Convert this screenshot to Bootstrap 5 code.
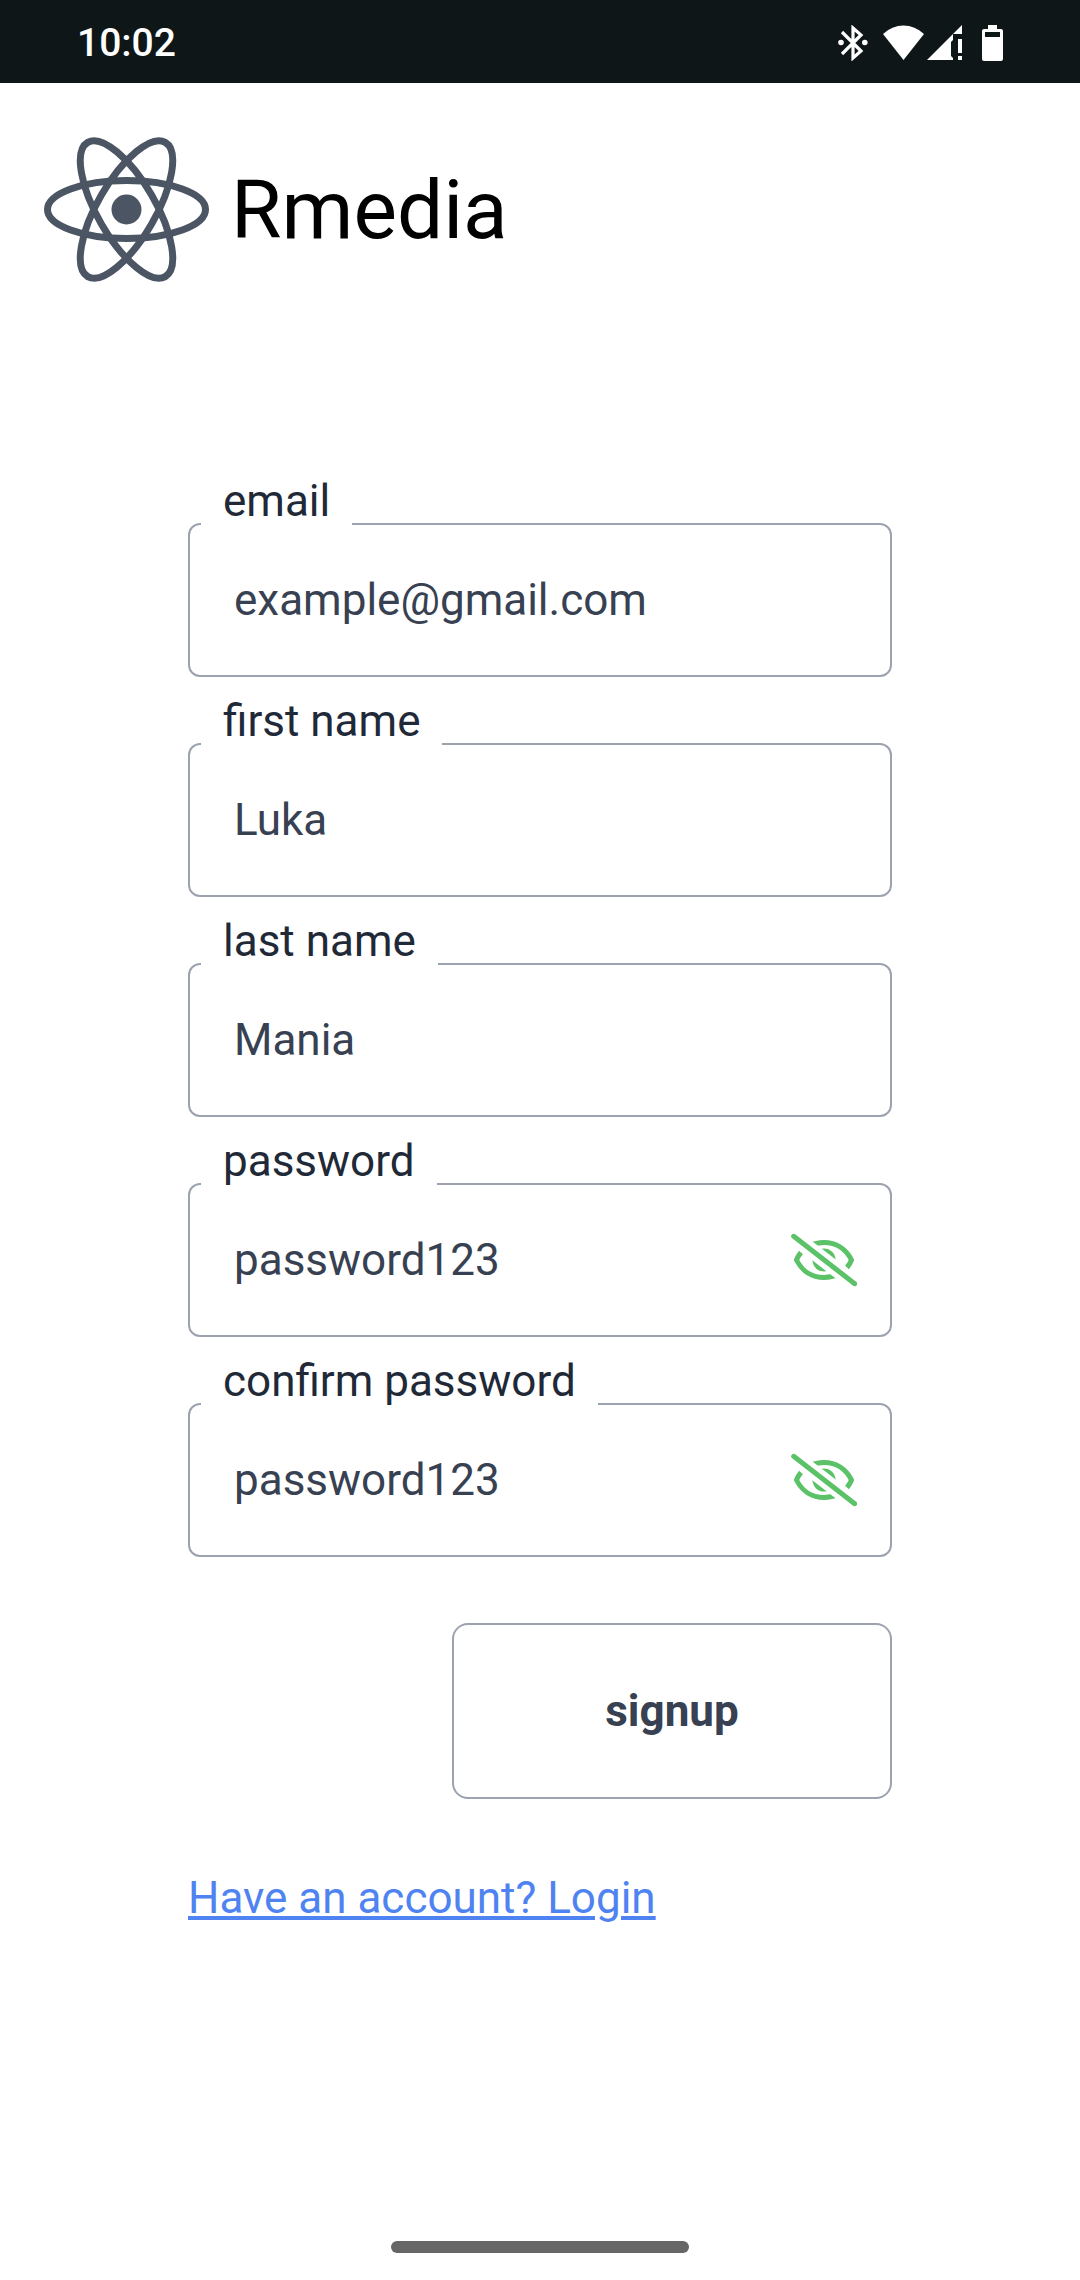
<!DOCTYPE html>
<html lang="en">
<head>
<meta charset="utf-8">
<meta name="viewport" content="width=device-width, initial-scale=1">
<title>Rmedia – signup</title>
<link href="https://cdn.jsdelivr.net/npm/bootstrap@5.3.0/dist/css/bootstrap.min.css" rel="stylesheet">
<style>
  body { font-family: Roboto, "Noto Sans", sans-serif; font-size: 44px; line-height: 52px; color: #374151; background: #fff; }
  .status-bar { background: #0e1617; color: #fff; height: 83px; padding: 3px 77px 0; font-size: 39px; line-height: 44px; font-weight: 500; }
  .status-bar svg { height: 36px; display: block; }
  .icon-bt { margin-right: 15px; }
  .icon-wifi { margin-right: 3px; }
  .icon-cell { margin-right: 20px; }
  .brand { padding: 44px; gap: 22px; color: #000; }
  .brand-name { font-size: 82px; line-height: 96px; font-weight: 400; }
  .signup-form { max-width: 704px; padding-top: 139px; }
  .field + .field { margin-top: 18px; }
  .field-label { position: relative; z-index: 1; margin: 0 0 -4px 13px; padding: 0 22px; background: #fff; color: #1f2937; }
  .field-box { height: 154px; border: 2px solid #9ca3af; border-radius: 12px; padding-right: 33px; }
  .field-box .form-control { font-size: 44px; line-height: 52px; color: #374151; padding: 0 22px 0 44px; }
  .field-box .form-control:focus { box-shadow: none; }
  .field-box:focus-within { border-color: #6b7280; }
  .eye-btn svg { width: 66px; height: 66px; display: block; }
  .signup-btn { width: 440px; height: 176px; margin-top: 66px; border: 2px solid #9ca3af; border-radius: 16px; font-size: 44px; line-height: 52px; font-weight: 700; color: #374151; }
  .login-link { margin-top: 73px; color: #4f83f1; text-decoration-thickness: 4px; text-underline-offset: 3px; }
  .home-bar { width: 298px; height: 12px; margin-bottom: 27px; background: #666; }
</style>
</head>
<body>
<div class="min-vh-100 d-flex flex-column">
  <div class="status-bar d-flex align-items-center justify-content-between">
    <span>10:02</span>
    <div class="d-flex align-items-center">
      <svg class="icon-bt" viewBox="0 0 30 36" width="30" fill="none" stroke="#fff" stroke-width="3.2">
        <path d="M4 7 L23 26 L15 33 V3 L23 10 L4 29"/>
        <circle cx="3" cy="17.500" r="2.800" fill="#fff" stroke="none"/><circle cx="26.800" cy="17.500" r="2.800" fill="#fff" stroke="none"/>
      </svg>
      <svg class="icon-wifi" viewBox="0 0 41 36" width="41" fill="#fff"><path d="M20.500 35 L0 9 Q9 .5 20.500 .5 T41 9 Z"/></svg>
      <svg class="icon-cell" viewBox="0 0 35 36" width="35" fill="#fff"><path d="M0 35 L35 0 V9 H26 V15 L24 17 V31 L26 33 V35 Z M31 14 H35 V28 H31 Z M31 31 H35 V35 H31 Z"/></svg>
      <svg viewBox="0 0 21 36" width="21" fill="#fff" fill-rule="evenodd"><path d="M6 0 H15 V4 H19 Q21 4 21 6 V34 Q21 36 19 36 H2 Q0 36 0 34 V6 Q0 4 2 4 H6 Z M3 7 V12 H18 V7 Z"/></svg>
    </div>
  </div>

  <header class="brand d-flex align-items-center">
    <svg width="165" height="165" viewBox="-82.5 -82.5 165 165" fill="none" stroke="#4b5563" stroke-width="7" aria-hidden="true">
      <ellipse rx="79" ry="29"/>
      <ellipse rx="77.500" ry="29" transform="rotate(60)"/>
      <ellipse rx="77.500" ry="29" transform="rotate(120)"/>
      <circle r="15" fill="#4b5563" stroke="none"/>
    </svg>
    <h1 class="brand-name mb-0">Rmedia</h1>
  </header>

  <form class="signup-form w-100 mx-auto d-flex flex-column">
    <div class="field d-flex flex-column align-items-start">
      <label class="field-label" for="email">email</label>
      <div class="field-box w-100 d-flex align-items-center">
        <input class="form-control border-0 bg-transparent" id="email" type="email" value="example@gmail.com">
      </div>
    </div>
    <div class="field d-flex flex-column align-items-start">
      <label class="field-label" for="first">first name</label>
      <div class="field-box w-100 d-flex align-items-center">
        <input class="form-control border-0 bg-transparent" id="first" type="text" value="Luka">
      </div>
    </div>
    <div class="field d-flex flex-column align-items-start">
      <label class="field-label" for="last">last name</label>
      <div class="field-box w-100 d-flex align-items-center">
        <input class="form-control border-0 bg-transparent" id="last" type="text" value="Mania">
      </div>
    </div>
    <div class="field d-flex flex-column align-items-start">
      <label class="field-label" for="pass">password</label>
      <div class="field-box w-100 d-flex align-items-center">
        <input class="form-control border-0 bg-transparent" id="pass" type="text" value="password123">
        <button class="eye-btn btn border-0 p-0" type="button" aria-label="Hide password">
          <svg viewBox="0 0 66 66" fill="none" stroke="#5bc268" stroke-width="5">
            <path d="M10 25.500 Q7 29 5.500 33 C11 44 21 50.500 33 50.500 Q41 50.500 48 47"/>
            <path d="M18 19 Q25 15.500 33 15.500 C45 15.500 55 22 60.500 33 Q59 37 56 40.500"/>
            <circle cx="33" cy="33" r="11.500" fill="#5bc268" stroke="none"/>
            <path d="M2.700 9.300 L63.700 56.700" stroke="#fff" stroke-width="15"/>
            <path d="M2.700 9.300 L63.700 56.700" stroke-linecap="round"/>
          </svg>
        </button>
      </div>
    </div>
    <div class="field d-flex flex-column align-items-start">
      <label class="field-label" for="confirm">confirm password</label>
      <div class="field-box w-100 d-flex align-items-center">
        <input class="form-control border-0 bg-transparent" id="confirm" type="text" value="password123">
        <button class="eye-btn btn border-0 p-0" type="button" aria-label="Hide password confirmation">
          <svg viewBox="0 0 66 66" fill="none" stroke="#5bc268" stroke-width="5">
            <path d="M10 25.500 Q7 29 5.500 33 C11 44 21 50.500 33 50.500 Q41 50.500 48 47"/>
            <path d="M18 19 Q25 15.500 33 15.500 C45 15.500 55 22 60.500 33 Q59 37 56 40.500"/>
            <circle cx="33" cy="33" r="11.500" fill="#5bc268" stroke="none"/>
            <path d="M2.700 9.300 L63.700 56.700" stroke="#fff" stroke-width="15"/>
            <path d="M2.700 9.300 L63.700 56.700" stroke-linecap="round"/>
          </svg>
        </button>
      </div>
    </div>
    <button class="signup-btn btn align-self-end" type="submit">signup</button>
    <a class="login-link align-self-start" href="#login">Have an account? Login</a>
  </form>

  <div class="home-bar rounded-pill mt-auto mx-auto"></div>
</div>
<script src="https://cdn.jsdelivr.net/npm/bootstrap@5.3.0/dist/js/bootstrap.bundle.min.js"></script>
</body>
</html>
